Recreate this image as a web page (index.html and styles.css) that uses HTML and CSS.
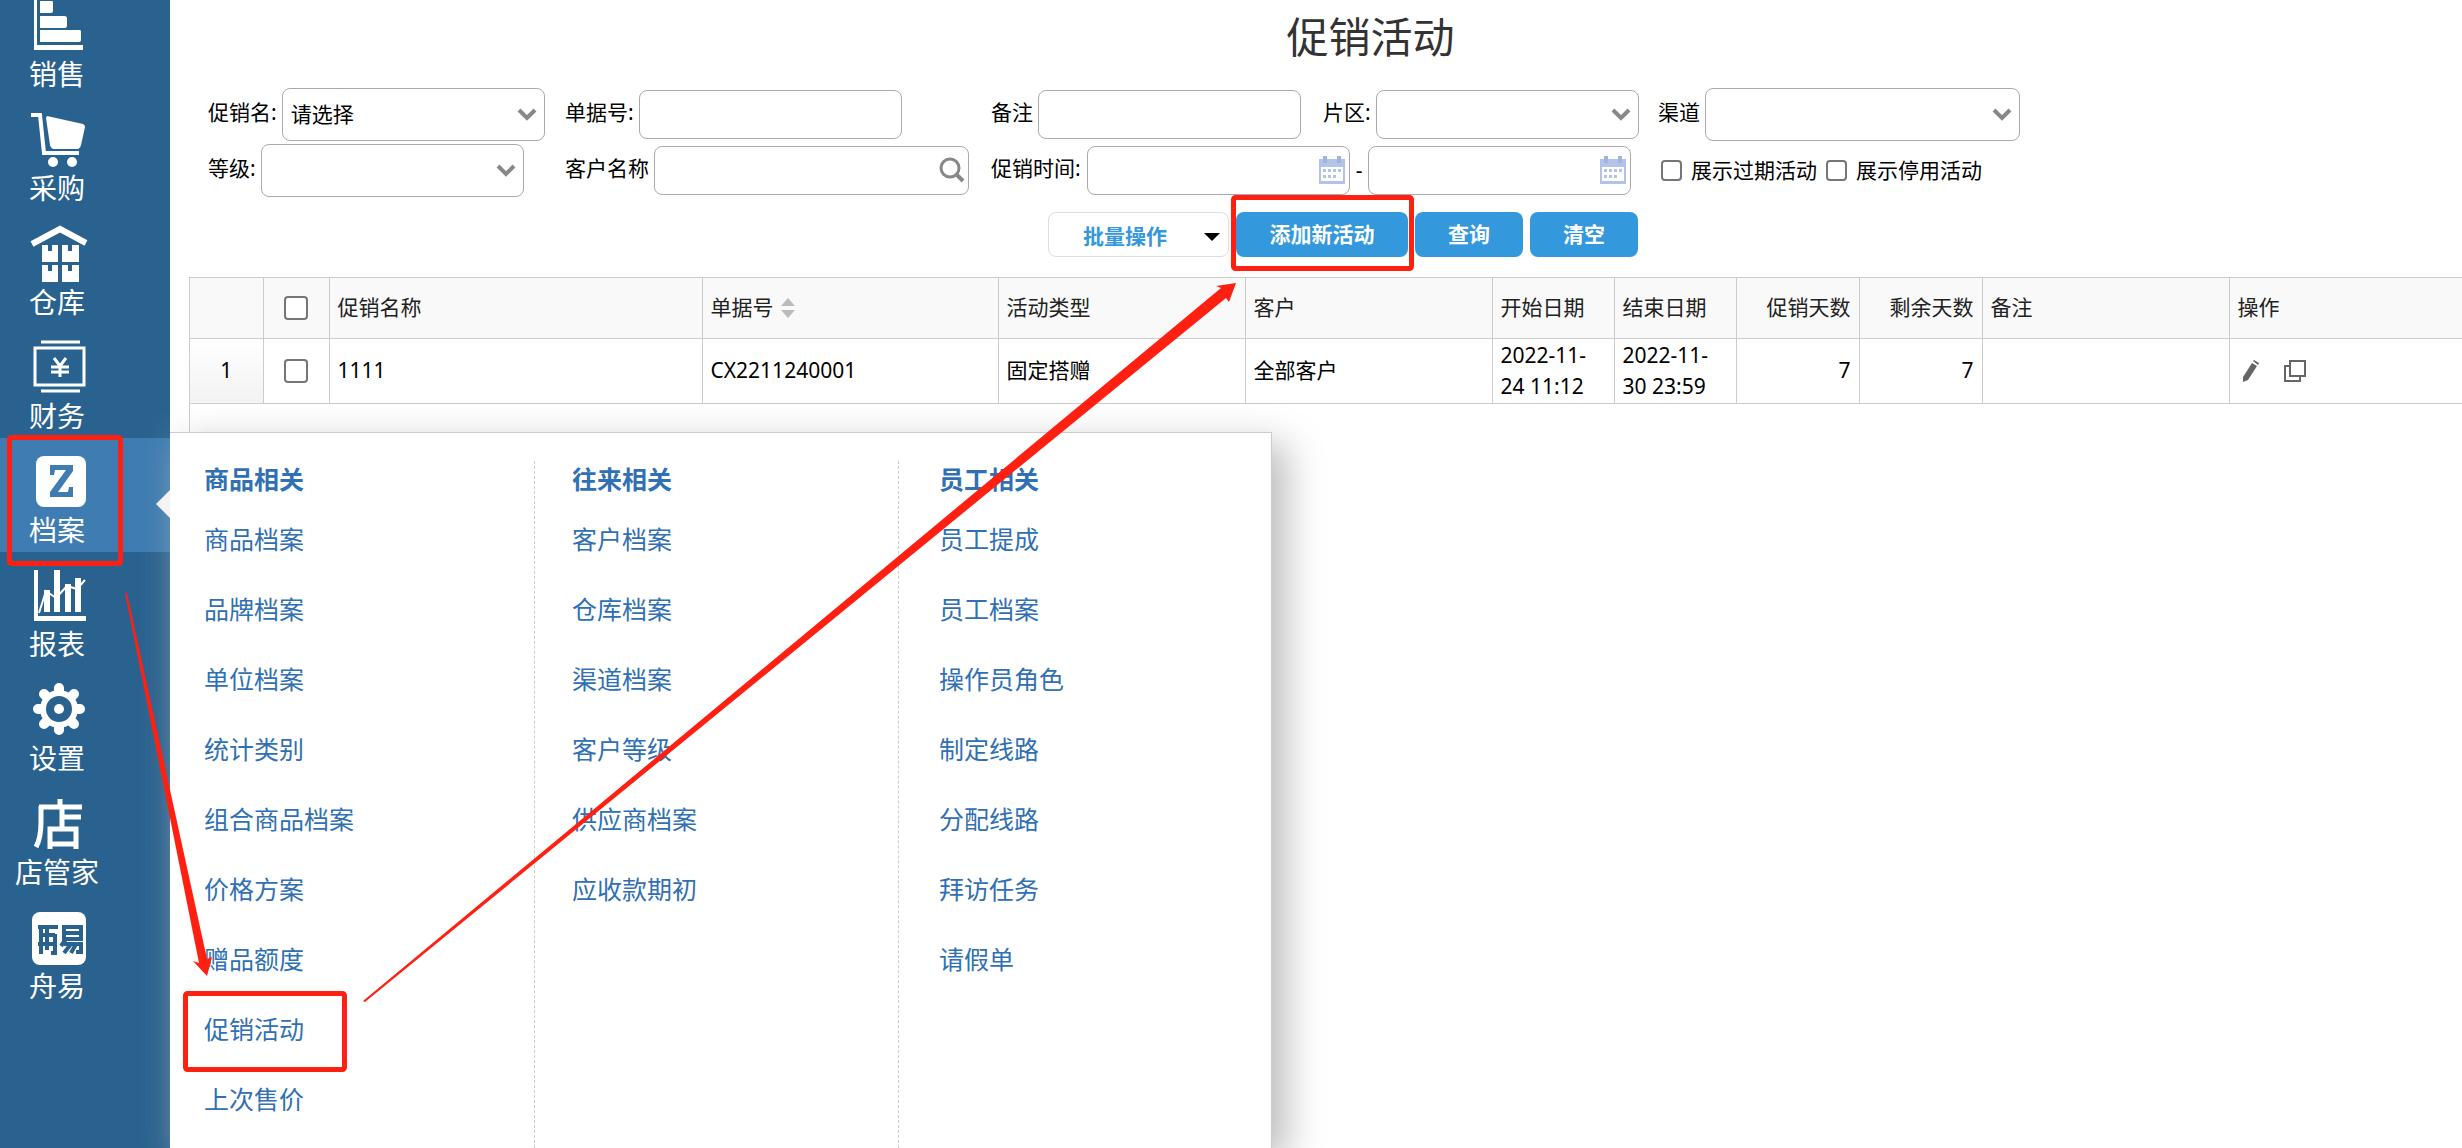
FILE: index.html
```html
<!DOCTYPE html>
<html lang="zh-CN">
<head>
<meta charset="utf-8">
<title>促销活动</title>
<link rel="stylesheet" href="styles.css">
</head>
<body>
<div class="app">
  <nav class="sidebar">
    <a class="nav-item" href="#">
      <svg class="nav-icon" viewBox="0 0 54 54"><path fill="#fff" d="M1 0h3v47h46v5H1zM7 3h12q1 0 1 1v9q0 2-2 2H7zM7 18h24q3 0 3 2v7q0 3-2 3H7zM7 32h40q1 0 1 2v8q0 2-2 2H7z"/></svg>
      <span>销售</span></a>
    <a class="nav-item" href="#">
      <svg class="nav-icon" viewBox="0 0 54 54"><path fill="none" stroke="#fff" stroke-width="4" d="M-2 3h9l4 38h35"/><path fill="#fff" d="M14 4l36 8q2 1 2 3l-4 18q-1 4-4 4H21q-3 0-4-4L13 6z"/><circle cx="20" cy="50" r="5" fill="#fff"/><circle cx="39" cy="50" r="5" fill="#fff"/></svg>
      <span>采购</span></a>
    <a class="nav-item" href="#">
      <svg class="nav-icon" viewBox="0 0 54 54"><path fill="none" stroke="#fff" stroke-width="6" d="M-1 18L27 3l26 14"/><path fill="#fff" d="M9 19h6v6h4v-6h6v17H9zM29 19h6v6h4v-6h7v17H29zM9 39h6v6h4v-6h6v17H9zM29 39h6v6h4v-6h7v17H29z"/></svg>
      <span>仓库</span></a>
    <a class="nav-item" href="#">
      <svg class="nav-icon" viewBox="0 0 54 54"><g fill="none" stroke="#fff" stroke-width="3"><path d="M8 2h39M8 51h39M2 8h49v37H2z"/><path d="M21 18l6 8 6-8M27 25v12M18 27h18M18 32h18"/></g></svg>
      <span>财务</span></a>
    <a class="nav-item active" href="#">
      <svg class="nav-icon" viewBox="0 0 54 54"><rect x="3" y="2" width="50" height="51" rx="8" fill="#fff"/><path fill="#3e7cb1" d="M17 11h23v6L25 38h10l1-5h4v10H17v-5l16-22H22l-1 5h-4z"/></svg>
      <span>档案</span></a>
    <a class="nav-item" href="#">
      <svg class="nav-icon" viewBox="0 0 54 54"><path fill="#fff" d="M1 2h4v46h48v5H1zM11 22h6v22h-6zM21 2h6v42h-6zM32 16h6v28h-6zM42 10h6v34h-6z"/><path fill="none" stroke="#fff" stroke-width="2" d="M6 45l7-22 10 7 11-12 10 3 8-9"/></svg>
      <span>报表</span></a>
    <a class="nav-item" href="#">
      <svg class="nav-icon" viewBox="0 0 54 54"><g stroke="#fff" stroke-width="10" stroke-linecap="round"><path d="M26 6v42M5 27h42M11 12l30 30M41 12L11 42"/></g><circle cx="26" cy="27" r="19" fill="#fff"/><circle cx="26" cy="27" r="13" fill="#2a628f"/><circle cx="26" cy="27" r="5" fill="#fff"/></svg>
      <span>设置</span></a>
    <a class="nav-item" href="#">
      <svg class="nav-icon" viewBox="0 0 54 54"><path fill="none" stroke="#fff" stroke-width="5" d="M27 3v8M6 11h43M8 10v16Q8 42 3 51M29 12v20M29 21h19M17 53V33h26v20M17 48h26"/></svg>
      <span>店管家</span></a>
    <a class="nav-item" href="#">
      <svg class="nav-icon" viewBox="0 0 54 54"><rect x="-1" y="2" width="54" height="53" rx="8" fill="#fff"/><g fill="none" stroke="#2a628f" stroke-width="4"><path d="M5 17h20M8 17v27M22 24v19h-4M8 25h14M5 34h17M14 19v21M31 17h17v12H31zM31 23h17M33 29l-5 7M31 34h17v8h-5M38 34l-7 9M43 34l-5 9"/></g></svg>
      <span>舟易</span></a>
  </nav>

  <main class="main">
    <h1 class="title">促销活动</h1>
    <form class="filters">
      <div class="field">
        <label for="promo">促销名:</label>
        <span class="pick tall"><select id="promo"><option>请选择</option></select><svg class="chev" viewBox="0 0 20 14"><path d="M2 3l8 8 8-8"/></svg></span>
      </div>
      <div class="field"><label for="no">单据号:</label><input class="box" id="no" type="text"></div>
      <div class="field"><label for="memo">备注</label><input class="box" id="memo" type="text"></div>
      <div class="field">
        <label for="area">片区:</label>
        <span class="pick"><select id="area"><option></option></select><svg class="chev" viewBox="0 0 20 14"><path d="M2 3l8 8 8-8"/></svg></span>
      </div>
      <div class="field">
        <label for="channel">渠道</label>
        <span class="pick tall wide"><select id="channel"><option></option></select><svg class="chev" viewBox="0 0 20 14"><path d="M2 3l8 8 8-8"/></svg></span>
      </div>
      <div class="field">
        <label for="level">等级:</label>
        <span class="pick tall"><select id="level"><option></option></select><svg class="chev" viewBox="0 0 20 14"><path d="M2 3l8 8 8-8"/></svg></span>
      </div>
      <div class="field">
        <label for="customer">客户名称</label>
        <span class="pick wide"><input class="box" id="customer" type="text"><svg class="mag" viewBox="0 0 26 26"><circle cx="11" cy="11" r="9"/><path stroke-width="4" d="M17 17l7 7"/></svg></span>
      </div>
      <div class="field dates">
        <label for="from">促销时间:</label>
        <span class="pick"><input class="box" id="from" type="text"><svg class="cal" viewBox="0 0 26 28"><use href="#calendar"/></svg></span>
        <span>-</span>
        <span class="pick"><input class="box" type="text" aria-label="结束时间"><svg class="cal" viewBox="0 0 26 28"><use href="#calendar"/></svg></span>
      </div>
      <div class="field checks">
        <input class="tick" id="expired" type="checkbox"><label for="expired">展示过期活动</label>
        <input class="tick" id="stopped" type="checkbox"><label for="stopped">展示停用活动</label>
      </div>
    </form>
    <div class="actions">
      <button class="btn batch" type="button"><span>批量操作</span><svg width="16" height="8" viewBox="0 0 16 8"><path d="M0 0h16L8 8z"/></svg></button>
      <button class="btn add" type="button">添加新活动</button>
      <button class="btn" type="button">查询</button>
      <button class="btn" type="button">清空</button>
    </div>
    <div class="grid-panel">
      <table class="grid">
        <colgroup><col class="c-num"><col class="c-check"><col class="c-name"><col class="c-no"><col class="c-mid"><col class="c-mid"><col class="c-date"><col class="c-date"><col class="c-day"><col class="c-day"><col class="c-mid"><col></colgroup>
        <thead>
          <tr>
            <th></th>
            <th class="center"><input class="tick big" type="checkbox" aria-label="全选"></th>
            <th>促销名称</th>
            <th><span class="sortable">单据号<svg width="14" height="20" viewBox="0 0 14 20"><path fill="#bbb" d="M0 8l7-8 7 8zM0 12h14l-7 8z"/></svg></span></th>
            <th>活动类型</th><th>客户</th><th>开始日期</th><th>结束日期</th>
            <th class="num">促销天数</th><th class="num">剩余天数</th><th>备注</th><th>操作</th>
          </tr>
        </thead>
        <tbody>
          <tr>
            <td class="row-no">1</td>
            <td class="center"><input class="tick big" type="checkbox" aria-label="选择第1行"></td>
            <td>1111</td><td>CX2211240001</td><td>固定搭赠</td><td>全部客户</td>
            <td>2022-11-<br>24 11:12</td><td>2022-11-<br>30 23:59</td>
            <td class="num">7</td><td class="num">7</td><td></td>
            <td><span class="tools">
              <button type="button" aria-label="编辑"><svg width="20" height="24" viewBox="0 0 20 24"><path fill="#666" d="M3 18L12 4l5 3-9 14-5 2zM13 2l1-1 5 3-1 2z"/></svg></button>
              <button type="button" aria-label="复制"><svg width="24" height="24" viewBox="0 0 24 24"><path fill="none" stroke="#666" stroke-width="2" d="M7 2h15v15H7zM7 7H2v15h15v-5"/></svg></button>
            </span></td>
          </tr>
        </tbody>
      </table>
    </div>
  </main>

  <div class="menu">
    <section class="menu-col">
      <h2>商品相关</h2>
      <a href="#">商品档案</a><a href="#">品牌档案</a><a href="#">单位档案</a><a href="#">统计类别</a><a href="#">组合商品档案</a><a href="#">价格方案</a><a href="#">赠品额度</a><a href="#">促销活动</a><a href="#">上次售价</a>
    </section>
    <section class="menu-col">
      <h2>往来相关</h2>
      <a href="#">客户档案</a><a href="#">仓库档案</a><a href="#">渠道档案</a><a href="#">客户等级</a><a href="#">供应商档案</a><a href="#">应收款期初</a>
    </section>
    <section class="menu-col">
      <h2>员工相关</h2>
      <a href="#">员工提成</a><a href="#">员工档案</a><a href="#">操作员角色</a><a href="#">制定线路</a><a href="#">分配线路</a><a href="#">拜访任务</a><a href="#">请假单</a>
    </section>
  </div>

  <svg class="marks" width="1420" height="1080" viewBox="0 0 1420 1080" aria-hidden="true">
    <g fill="none" stroke="#ff2012" stroke-width="5">
      <rect x="9.500" y="437.500" width="111" height="126" rx="2"/>
      <rect x="185.500" y="993.500" width="159" height="76" rx="2"/>
      <rect x="1233.500" y="197.500" width="178" height="71" rx="2"/>
    </g>
    <g fill="#ff2012">
      <path d="M125 593h2l80 366 5-2-5 19-14-15 6 2z"/>
      <path d="M363 1001L1221 288l-5-2 20-3-7 19-3-4L365 1002z"/>
    </g>
  </svg>
</div>

<svg class="defs" width="0" height="0" aria-hidden="true">
  <symbol id="calendar" viewBox="0 0 26 28">
    <path fill="#b3c3e8" d="M0 3h26v25H0zM2 11v14h22V11z" fill-rule="evenodd"/>
    <path fill="#9fb3e0" d="M4 0h4v7H4zM18 0h4v7h-4z"/>
    <path fill="#b3c3e8" d="M4 13h3v3H4zM9 13h3v3H9zM14 13h3v3h-3zM19 13h3v3h-3zM4 19h3v3H4zM9 19h3v3H9zM14 19h3v3h-3z"/>
  </symbol>
</svg>
</body>
</html>
```
FILE: styles.css
```css
* { box-sizing: border-box; }

body {
  margin: 0;
  background: #fff;
  color: #000;
  font: 21px/31px "Noto Sans", "Noto Sans CJK SC", sans-serif;
}

a { text-decoration: none; }

input, select, button { font: inherit; color: inherit; }

.app {
  position: relative;
  display: flex;
  min-height: 100vh;
  overflow: hidden;
}

.defs { position: absolute; }

/* Sidebar */
.sidebar {
  flex: 0 0 170px;
  margin-top: -18px;
  background: #2a628f;
}

.nav-item {
  display: flex;
  flex-direction: column;
  align-items: center;
  height: 114px;
  padding: 15px 56px 0 0;
  color: #fff;
  font-size: 28px;
  line-height: 42px;
}

.nav-item.active {
  position: relative;
  background: #3e7cb1;
}

.nav-item.active::after {
  content: "";
  position: absolute;
  right: 0;
  top: 52px;
  z-index: 3;
  border: 14px solid transparent;
  border-left-width: 0;
  border-right-color: #f4f4f4;
}

.nav-icon {
  width: 54px;
  height: 56px;
  margin-left: 6px;
  overflow: visible;
}

/* Main area */
.main {
  flex: 1;
  min-width: 0;
  padding-left: 19px;
  display: flex;
  flex-direction: column;
}

.title {
  margin: 0;
  padding: 8px 0 0 90px;
  height: 86px;
  color: #333;
  font-size: 42px;
  font-weight: 400;
  line-height: 58px;
  text-align: center;
}

.filters {
  display: grid;
  grid-template-columns: 357px 426px 332px 335px 1fr;
  grid-template-rows: 56px 56px;
  padding-left: 19px;
}

.field {
  display: flex;
  align-items: center;
  gap: 5px;
  white-space: nowrap;
}

.field > label:first-child { padding-bottom: 4px; }

.dates { grid-column: span 2; gap: 6px; }
.checks { gap: 9px; padding-left: 3px; }

.box, .pick select {
  width: 263px;
  height: 49px;
  padding: 0 8px;
  border: 1px solid #aaa;
  border-radius: 8px;
  background: #fff;
}

.pick { position: relative; display: flex; }
.pick select { appearance: none; }
.tall select { height: 53px; }
.wide select, .wide .box { width: 315px; }

.chev, .mag, .cal {
  position: absolute;
  top: 0;
  bottom: 0;
  margin: auto 0;
  pointer-events: none;
}

.chev {
  right: 8px;
  width: 20px;
  height: 14px;
  fill: none;
  stroke: #888;
  stroke-width: 4;
}

.mag {
  right: 4px;
  width: 26px;
  height: 26px;
  fill: none;
  stroke: #888;
  stroke-width: 3;
}

.cal { right: 5px; width: 26px; height: 28px; }

.tick {
  appearance: none;
  width: 21px;
  height: 21px;
  margin: 0;
  border: 2px solid #767676;
  border-radius: 4px;
  background: #fff;
}

.tick.big { width: 24px; height: 24px; display: block; margin: 0 auto; }

.actions {
  display: flex;
  justify-content: center;
  gap: 7px;
  padding: 14px 0 20px 35px;
}

.btn {
  width: 108px;
  height: 45px;
  padding: 0;
  border: 0;
  border-radius: 8px;
  background: #3398dc;
  color: #fff;
  font-weight: 700;
}

.btn.add { width: 172px; }

.btn.batch {
  display: flex;
  align-items: center;
  justify-content: space-between;
  width: 181px;
  padding: 4px 8px 0 34px;
  border: 1px solid #ddd;
  background: #fff;
  color: #3398dc;
}

.batch svg { fill: #000; }

/* Data grid */
.grid-panel {
  flex: 1;
  border: solid #ccc;
  border-width: 1px 0 0 1px;
}

.grid {
  width: 100%;
  table-layout: fixed;
  border-collapse: collapse;
}

.c-num { width: 73px; }
.c-check { width: 66px; }
.c-name { width: 373px; }
.c-no { width: 296px; }
.c-mid { width: 247px; }
.c-date { width: 122px; }
.c-day { width: 123px; }

.grid th, .grid td {
  padding: 0 8px;
  border-right: 1px solid #ccc;
  border-bottom: 1px solid #ccc;
  text-align: left;
  white-space: nowrap;
}

.grid th {
  height: 60px;
  background: #f9f9f9;
  color: #222;
  font-weight: 400;
}

.grid td { height: 65px; }
.grid th:last-child, .grid td:last-child { border-right: 0; }
.grid .num { text-align: right; }
.grid .center { text-align: center; }

.grid .row-no {
  background: linear-gradient(#fff, #f2f2f2);
  text-align: center;
}

.sortable, .tools { display: flex; align-items: center; gap: 7px; }
.tools { gap: 23px; padding-left: 2px; }

.tools button {
  display: flex;
  padding: 0;
  border: 0;
  background: none;
}

/* Flyout menu */
.menu {
  position: absolute;
  left: 170px;
  top: 432px;
  bottom: 0;
  z-index: 2;
  display: grid;
  grid-template-columns: 365px 364px 372px;
  padding-top: 28px;
  border: solid #ccc;
  border-width: 1px 1px 0 0;
  background: #fff;
  box-shadow: 14px 12px 36px #bbb;
}

.menu-col {
  display: flex;
  flex-direction: column;
  padding-left: 34px;
  border-right: 1px dashed #ccc;
}

.menu-col + .menu-col { padding-left: 37px; }
.menu-col:last-child { padding-left: 40px; border-right: 0; }

.menu-col h2 {
  margin: 0;
  color: #3070b3;
  font-size: 25px;
  font-weight: 700;
  line-height: 36px;
  padding-bottom: 7px;
}

.menu-col a {
  color: #3070b3;
  font-size: 25px;
  line-height: 70px;
}

/* Tutorial highlights drawn over the page */
.marks {
  position: absolute;
  left: 0;
  top: 0;
  z-index: 4;
  pointer-events: none;
}
```
